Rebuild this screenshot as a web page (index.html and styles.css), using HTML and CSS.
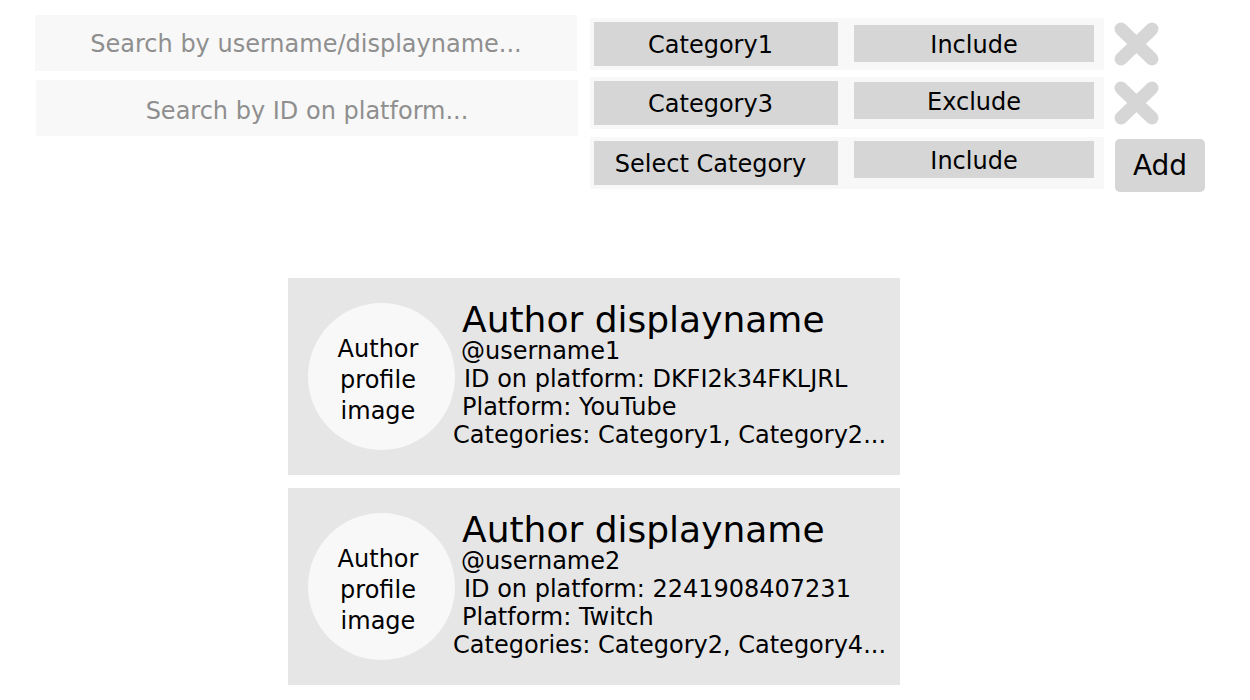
FILE: index.html
```html
<!DOCTYPE html>
<html lang="en">
<head>
<meta charset="utf-8">
<title>Authors</title>
<link rel="stylesheet" href="styles.css">
</head>
<body>
<div class="page">
  <section class="top">
    <div class="searches">
      <input class="search" type="text" placeholder="Search by username/displayname...">
      <input class="search search-id" type="text" placeholder="Search by ID on platform...">
    </div>
    <div class="filters">
      <div class="filter-row">
        <div class="filter-box">
          <div class="select select-cat">Category1</div>
          <div class="select select-mode mode-r1">Include</div>
        </div>
        <svg class="remove" viewBox="0 0 45 44" width="45" height="44" aria-label="Remove">
          <path d="M7 7 L38 37 M38 7 L7 37" stroke="#d6d6d6" stroke-width="13" stroke-linecap="round" fill="none"/>
        </svg>
      </div>
      <div class="filter-row">
        <div class="filter-box">
          <div class="select select-cat">Category3</div>
          <div class="select select-mode mode-r2">Exclude</div>
        </div>
        <svg class="remove" viewBox="0 0 45 44" width="45" height="44" aria-label="Remove">
          <path d="M7 7 L38 37 M38 7 L7 37" stroke="#d6d6d6" stroke-width="13" stroke-linecap="round" fill="none"/>
        </svg>
      </div>
      <div class="filter-row filter-row-new">
        <div class="filter-box">
          <div class="select select-cat">Select Category</div>
          <div class="select select-mode">Include</div>
        </div>
        <div class="add-btn">Add</div>
      </div>
    </div>
  </section>

  <section class="cards">
    <article class="card">
      <div class="avatar"><span>Author<br>profile<br>image</span></div>
      <div class="info">
        <div class="name">Author displayname</div>
        <div class="line l-user">@username1</div>
        <div class="line l-id">ID on platform: DKFI2k34FKLJRL</div>
        <div class="line l-plat">Platform: YouTube</div>
        <div class="line l-cat">Categories: Category1, Category2...</div>
      </div>
    </article>
    <article class="card">
      <div class="avatar"><span>Author<br>profile<br>image</span></div>
      <div class="info">
        <div class="name">Author displayname</div>
        <div class="line l-user">@username2</div>
        <div class="line l-id">ID on platform: 2241908407231</div>
        <div class="line l-plat">Platform: Twitch</div>
        <div class="line l-cat">Categories: Category2, Category4...</div>
      </div>
    </article>
  </section>
</div>
</body>
</html>
```

FILE: styles.css
```css
html, body {
  margin: 0;
  padding: 0;
  background: #ffffff;
}

body {
  font-family: "DejaVu Sans", "Liberation Sans", sans-serif;
  color: #000;
}

.page {
  padding: 15px 0 0 35px;
}

.top {
  display: flex;
  align-items: flex-start;
  gap: 12px;
}

.searches {
  display: flex;
  flex-direction: column;
  gap: 9px;
}

.search {
  display: block;
  box-sizing: border-box;
  width: 542px;
  height: 56px;
  margin: 0;
  border: none;
  outline: none;
  background: #f8f8f8;
  font-family: "DejaVu Sans", sans-serif;
  font-size: 24px;
  text-align: center;
  color: #000;
  padding: 2px 0 0 0;
}

.search::placeholder {
  color: #8f8f8f;
  opacity: 1;
}

.search-id {
  margin-left: 1px;
  padding-top: 5px;
}

.filters {
  display: flex;
  flex-direction: column;
  gap: 7px;
  margin-top: 3px;
}

.filter-row {
  display: flex;
  align-items: flex-start;
  gap: 10px;
}

.filter-row-new {
  margin-top: 1px;
  gap: 11px;
}

.filter-box {
  display: flex;
  align-items: flex-start;
  gap: 16px;
  padding: 4px 10px 4px 4px;
  background: #f8f8f8;
}

.select {
  display: flex;
  align-items: center;
  justify-content: center;
  box-sizing: border-box;
  padding-top: 2px;
  background: #d6d6d6;
  font-size: 24px;
  white-space: nowrap;
}

.select-cat {
  width: 244px;
  height: 44px;
  padding-right: 11px;
}

.select-mode {
  width: 240px;
  height: 37px;
}

.mode-r1 {
  margin-top: 3px;
}

.mode-r2 {
  margin-top: 1px;
}

.remove {
  display: block;
  margin-top: 4px;
}

.add-btn {
  display: flex;
  align-items: center;
  justify-content: center;
  width: 90px;
  height: 53px;
  margin-top: 2px;
  background: #d6d6d6;
  border-radius: 5px;
  font-size: 28px;
}

.cards {
  display: flex;
  flex-direction: column;
  gap: 13px;
  margin: 86px 0 0 253px;
}

.card {
  display: flex;
  align-items: center;
  width: 612px;
  height: 197px;
  box-sizing: border-box;
  padding-left: 20px;
  background: #e6e6e6;
}

.avatar {
  flex: none;
  display: flex;
  align-items: center;
  justify-content: center;
  width: 147px;
  height: 147px;
  border-radius: 50%;
  background: #f8f8f8;
  font-size: 24px;
  line-height: 31px;
  text-align: center;
  box-sizing: border-box;
  padding: 8px 7px 0 0;
}

.info {
  margin-left: -2px;
  white-space: nowrap;
}

.name {
  font-size: 36px;
  line-height: 30px;
  margin-left: 9px;
}

.line {
  font-size: 24px;
  line-height: 28px;
}

.l-user { margin-left: 8px; margin-top: 2px; }
.l-id { margin-left: 11px; }
.l-plat { margin-left: 9px; }
.l-cat { margin-left: 0; }
```
